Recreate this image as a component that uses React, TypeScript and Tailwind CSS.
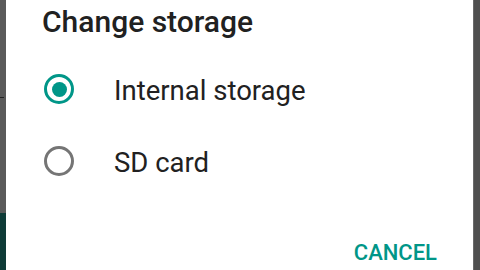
export default function App() {
  return (
    <div
      className="w-[480px] h-[270px] overflow-hidden flex bg-[#555555]"
      style={{ fontFamily: 'Roboto, "Noto Sans", sans-serif' }}
    >
      {/* Left background sliver */}
      <div className="w-[6px] h-full flex flex-col relative">
        <div className="flex-1 bg-[#5a5a5a]" />
        <div className="h-[57px] bg-[#0e3b37]" />
        <div className="absolute left-0 top-[97px] w-[4px] h-[1px] bg-[#222]" />
      </div>

      {/* Dialog */}
      <div className="w-[467px] h-full bg-white flex flex-col pl-[36px] pr-[36px]">
        <div className="pt-[2px] h-[50px] text-[30px] font-medium text-[#212121] leading-[40px]">
          Change storage
        </div>

        <div className="flex items-center h-[72px] mt-[3px]">
          <div className="w-[34px] flex justify-center">
            <div className="w-[30px] h-[30px] rounded-full border-[3px] border-[#009688] flex items-center justify-center">
              <div className="w-[15px] h-[15px] rounded-full bg-[#009688]" />
            </div>
          </div>
          <span className="ml-[38px] mt-[3px] text-[27.5px] text-[#212121] leading-none">Internal storage</span>
        </div>

        <div className="flex items-center h-[72px]">
          <div className="w-[34px] flex justify-center">
            <div className="w-[30px] h-[30px] rounded-full border-[3px] border-[#757575]" />
          </div>
          <span className="ml-[38px] mt-[3px] text-[27.5px] text-[#212121] leading-none">SD card</span>
        </div>

        <div className="flex-1 flex items-end justify-end pb-[4px]">
          <span className="text-[22px] font-medium text-[#009688] leading-[26px]">
            CANCEL
          </span>
        </div>
      </div>

      {/* Right background sliver */}
      <div className="flex-1 h-full bg-[#4f4f4f] border-l border-[#6a6a6a]" />
    </div>
  );
}
